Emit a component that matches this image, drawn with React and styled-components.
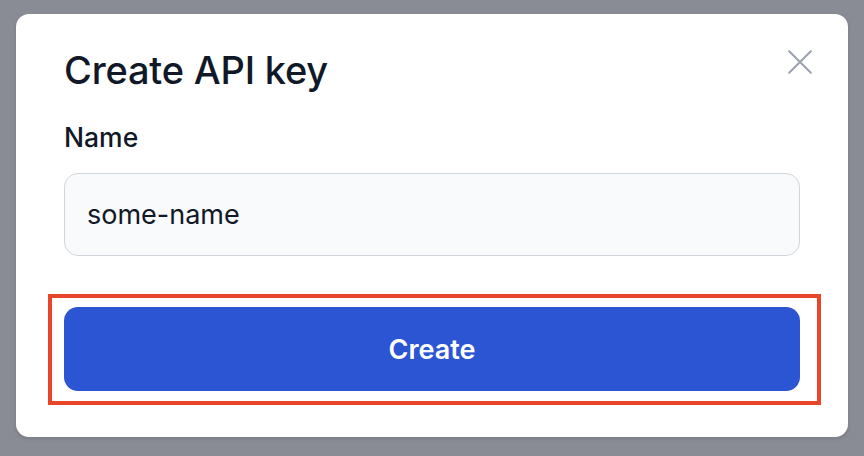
import React, { useState } from "react";
import styled, { createGlobalStyle } from "styled-components";

const GlobalStyle = createGlobalStyle`
  html, body {
    margin: 0;
    padding: 0;
    background: #898c95;
  }
  body {
    font-family: Inter, "Noto Sans", "Liberation Sans", sans-serif;
    -webkit-font-smoothing: antialiased;
  }
`;

const Backdrop = styled.div`
  width: 864px;
  height: 456px;
  padding: 14px 16px 0;
  box-sizing: border-box;
`;

const Card = styled.div`
  background: #ffffff;
  border-radius: 13px;
  box-shadow: 0 2px 4px rgba(0, 0, 0, 0.12);
  padding: 33px 48px 48px;
  height: 423px;
  box-sizing: border-box;
  display: flex;
  flex-direction: column;
`;

const Header = styled.div`
  display: flex;
  align-items: flex-start;
  justify-content: space-between;
`;

const Title = styled.h2`
  margin: 0;
  font-size: 38px;
  line-height: 46px;
  font-weight: 500;
  color: #111827;
  letter-spacing: -0.2px;
`;

const CloseButton = styled.button`
  border: 0;
  background: none;
  padding: 0;
  margin: -9px -24px 0 0;
  width: 48px;
  height: 48px;
  display: flex;
  align-items: center;
  justify-content: center;
  color: #9ca3af;
  cursor: pointer;
`;

const Field = styled.div`
  display: flex;
  flex-direction: column;
  margin-top: 28px;
`;

const Label = styled.label`
  font-size: 26.5px;
  line-height: 32px;
  font-weight: 500;
  color: #111827;
`;

const Input = styled.input`
  margin-top: 20px;
  height: 83px;
  box-sizing: border-box;
  border: 1.5px solid #d1d5db;
  border-radius: 14px;
  background: #f9fafb;
  padding: 0 22px;
  font-family: inherit;
  font-size: 27px;
  color: #111827;
  outline: none;
`;

const ActionArea = styled.div`
  position: relative;
  margin-top: 51px;
`;

const Highlight = styled.div`
  position: absolute;
  left: -16px;
  right: -21px;
  top: -13px;
  bottom: -14px;
  border: 4.5px solid #e8452b;
  pointer-events: none;
`;

const PrimaryButton = styled.button`
  width: 100%;
  height: 84px;
  border: 0;
  border-radius: 14px;
  background: #2c55d3;
  color: #ffffff;
  font-family: inherit;
  font-size: 27px;
  font-weight: 600;
  cursor: pointer;
`;

export default function App() {
  const [name, setName] = useState("some-name");

  return (
    <>
      <GlobalStyle />
      <Backdrop>
        <Card>
          <Header>
            <Title>Create API key</Title>
            <CloseButton aria-label="Close">
              <svg width="26" height="26" viewBox="0 0 24 24" fill="none" stroke="currentColor" strokeWidth="1.9" strokeLinecap="round">
                <path d="M2 2 L22 22 M22 2 L2 22" />
              </svg>
            </CloseButton>
          </Header>
          <Field>
            <Label htmlFor="key-name">Name</Label>
            <Input id="key-name" value={name} onChange={(e) => setName(e.target.value)} />
          </Field>
          <ActionArea>
            <PrimaryButton>Create</PrimaryButton>
            <Highlight />
          </ActionArea>
        </Card>
      </Backdrop>
    </>
  );
}
